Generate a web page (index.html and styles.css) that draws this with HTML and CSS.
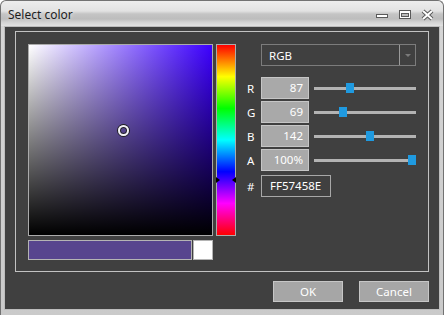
FILE: index.html
```html
<!DOCTYPE html>
<html>
<head>
<meta charset="utf-8">
<link rel="stylesheet" href="styles.css">
</head>
<body>
<div class="window">
  <div class="titlebar">
    <span class="title">Select color</span>
    <svg class="controls" width="58" height="12" viewBox="0 0 58 12">
      <rect x="0.5" y="5.5" width="11" height="3" fill="#fff" stroke="#5a5a5a"/>
      <rect x="23.5" y="1.5" width="11" height="8" fill="#fff" stroke="#5a5a5a"/>
      <rect x="25.5" y="4.5" width="7" height="3" fill="#bdbdbd" stroke="#5a5a5a"/>
      <path d="M47 2 L56 10 M56 2 L47 10" stroke="#5a5a5a" stroke-width="4" fill="none"/>
      <path d="M47 2 L56 10 M56 2 L47 10" stroke="#fff" stroke-width="2" fill="none"/>
    </svg>
  </div>
  <div class="client">
    <div class="group">
      <div class="left">
        <div class="pickers">
          <div class="sv"><span class="sv-marker"></span></div>
          <div class="hue"><span class="hue-mark hue-left"></span><span class="hue-mark hue-right"></span></div>
        </div>
        <div class="previews">
          <div class="preview-new"></div>
          <div class="preview-old"></div>
        </div>
      </div>
      <div class="right">
        <div class="select">
          <span class="select-text">RGB</span>
          <span class="select-btn"><span class="arrow"></span></span>
        </div>
        <div class="channels">
          <div class="row">
            <span class="label">R</span>
            <span class="box">87</span>
            <div class="slider"><span class="track"></span><span class="thumb" style="left:32px"></span></div>
          </div>
          <div class="row">
            <span class="label">G</span>
            <span class="box">69</span>
            <div class="slider"><span class="track"></span><span class="thumb" style="left:25px"></span></div>
          </div>
          <div class="row">
            <span class="label">B</span>
            <span class="box">142</span>
            <div class="slider"><span class="track"></span><span class="thumb" style="left:52px"></span></div>
          </div>
          <div class="row">
            <span class="label">A</span>
            <span class="box">100%</span>
            <div class="slider"><span class="track"></span><span class="thumb" style="left:94px"></span></div>
          </div>
          <div class="row hex-row">
            <span class="label">#</span>
            <span class="hex">FF57458E</span>
          </div>
        </div>
      </div>
    </div>
    <div class="buttons">
      <button class="btn">OK</button>
      <button class="btn">Cancel</button>
    </div>
  </div>
</div>
</body>
</html>
```

FILE: styles.css
```css
* { box-sizing: border-box; }
body {
  margin: 0;
  font-family: "Noto Sans", "Open Sans", sans-serif;
  font-size: 11.5px;
  background: #ffffff;
}
.window {
  width: 444px;
  height: 315px;
  display: flex;
  flex-direction: column;
  border: 1px solid #727272;
  border-bottom: none;
  border-radius: 6px 6px 0 0;
  padding: 0 3px 5px 3px;
  background:
    linear-gradient(to bottom, #ededed 0px, #e2e2e2 10px, #c4c4c4 13px, #bdbdbd 18px, #d2d2d2 21px, #e2e2e2 25px) 0 0 / 100% 25px no-repeat,
    linear-gradient(to bottom, #d6d6d6, #cacaca);
}
.titlebar {
  height: 25px;
  flex: none;
  display: flex;
  align-items: center;
  justify-content: space-between;
}
.title {
  padding-left: 4px;
  font-size: 12px;
  color: #1e1e1e;
  text-shadow: 0 0 4px rgba(255,255,255,0.8);
  margin-top: 1px;
}
.controls {
  margin-right: 6px;
  margin-top: 2px;
}
.client {
  flex: 1;
  display: flex;
  flex-direction: column;
  border: 1px solid #bcbcbc;
  background: #404040;
  padding: 4px 10px 0 10px;
  color: #ffffff;
}
.group {
  border: 1px solid #c2c2c2;
  padding: 12px 12px 11px 12px;
  display: flex;
}
.left {
  display: flex;
  flex-direction: column;
  gap: 4px;
}
.pickers {
  display: flex;
  gap: 3px;
}
.sv {
  position: relative;
  width: 185px;
  height: 192px;
  border: 1px solid #ababab;
  background:
    linear-gradient(to bottom, rgba(0,0,0,0), #000000),
    linear-gradient(to right, #ffffff, #3c00ff);
}
.sv-marker {
  position: absolute;
  left: 89px;
  top: 80px;
  width: 11px;
  height: 11px;
  border-radius: 50%;
  border: 2px solid #f2f2f2;
  box-shadow: 0 0 0 1px #202020, inset 0 0 0 1px #202020;
}
.hue {
  position: relative;
  width: 20px;
  height: 192px;
  border: 1px solid #ababab;
  background: linear-gradient(to bottom, #ff0000, #ffff00, #00ff00, #00ffff, #0000ff, #ff00ff, #ff0000);
}
.hue-mark {
  position: absolute;
  top: 132px;
  width: 0;
  height: 0;
  border-top: 3px solid transparent;
  border-bottom: 3px solid transparent;
}
.hue-left {
  left: -1px;
  border-left: 4px solid #000;
}
.hue-right {
  right: -1px;
  border-right: 4px solid #000;
}
.previews {
  display: flex;
  gap: 1px;
}
.preview-new {
  width: 164px;
  height: 20px;
  background: #57458e;
  border: 1px solid #b4b4b4;
}
.preview-old {
  width: 20px;
  height: 20px;
  background: #ffffff;
  border: 1px solid #b4b4b4;
}
.right {
  margin-left: 11px;
  display: flex;
  flex-direction: column;
}
.select {
  margin-left: 14px;
  width: 155px;
  height: 22px;
  border: 1px solid #7c7c7c;
  display: flex;
  align-items: center;
}
.select-text {
  flex: 1;
  padding-left: 7px;
  color: #ffffff;
}
.select-btn {
  width: 16px;
  height: 100%;
  border-left: 1px solid #9a9a9a;
  display: flex;
  align-items: center;
  justify-content: center;
}
.arrow {
  width: 0;
  height: 0;
  border-left: 3px solid transparent;
  border-right: 3px solid transparent;
  border-top: 3px solid #7a7a7a;
}
.channels {
  margin-top: 11px;
  display: flex;
  flex-direction: column;
  gap: 2px;
}
.row {
  display: flex;
  align-items: center;
  height: 22px;
}
.hex-row {
  margin-top: 2px;
}
.label {
  width: 14px;
  color: #ffffff;
}
.box {
  width: 48px;
  height: 22px;
  background: #a9a9a9;
  border: 1px solid #c6c6c6;
  text-align: right;
  padding-right: 5px;
  line-height: 20px;
  color: #ffffff;
}
.slider {
  position: relative;
  margin-left: 5px;
  width: 102px;
  height: 10px;
}
.track {
  position: absolute;
  left: 0;
  right: 0;
  top: 4px;
  height: 3px;
  background: #b3b3b3;
}
.thumb {
  position: absolute;
  top: 0;
  width: 8px;
  height: 10px;
  background: #1f9ae0;
}
.hex {
  width: 70px;
  height: 22px;
  border: 1px solid #a8a8a8;
  padding-left: 8px;
  line-height: 20px;
  color: #ffffff;
}
.buttons {
  margin-top: 9px;
  display: flex;
  justify-content: flex-end;
  gap: 16px;
}
.btn {
  width: 70px;
  height: 21px;
  background: #a6a6a6;
  border: 1px solid #c6c6c6;
  color: #ffffff;
  font-family: "Noto Sans", "Open Sans", sans-serif;
  font-size: 11.5px;
  padding: 0;
}
```
